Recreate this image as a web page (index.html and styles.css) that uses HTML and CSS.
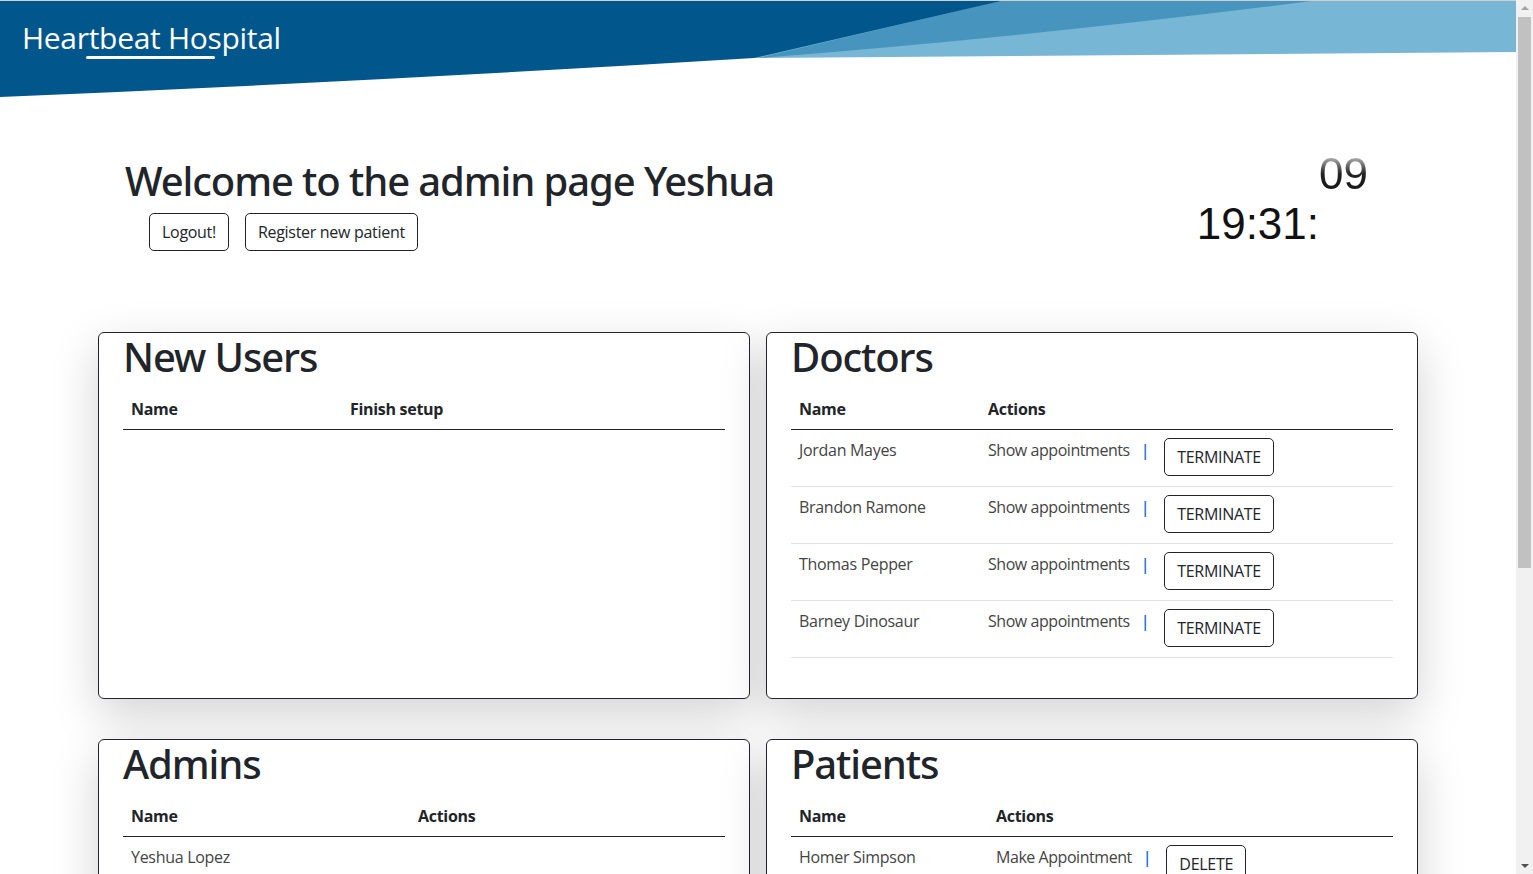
FILE: index.html
```html
<!DOCTYPE html>
<html lang="en">
<head>
<meta charset="utf-8">
<title>Heartbeat Hospital - Admin</title>
<link rel="stylesheet" href="styles.css">
</head>
<body>
<header class="topbar">
  <svg class="wave" viewBox="0 0 1516 96" preserveAspectRatio="none" aria-hidden="true">
    <rect x="0" y="0" width="1516" height="96" fill="#ffffff"/>
    <path d="M0 0 H1516 V51 L758 57 Z" fill="#78b6d6"/>
    <path d="M1000 0 H1312 Q1010 38 758 57 Z" fill="#4795bf"/>
    <path d="M0 0 H1001 L754 57 Q380 80 0 96 Z" fill="#01568c"/>
  </svg>
  <span class="brand">Heartbeat Hospital</span>
</header>

<main class="container">
  <section class="welcome">
    <div class="welcome-main">
      <h1 class="welcome-title">Welcome to the admin page Yeshua</h1>
      <div class="welcome-actions">
        <button class="btn">Logout!</button>
        <button class="btn">Register new patient</button>
      </div>
    </div>
    <div class="clock">19:31:<span class="clock-sec">09</span></div>
  </section>

  <section class="board">
    <article class="card">
      <h1 class="card-title">New Users</h1>
      <table class="list">
        <thead>
          <tr><th class="w-new">Name</th><th>Finish setup</th></tr>
        </thead>
        <tbody></tbody>
      </table>
    </article>

    <article class="card">
      <h1 class="card-title">Doctors</h1>
      <table class="list">
        <thead>
          <tr><th class="w-doc">Name</th><th>Actions</th></tr>
        </thead>
        <tbody>
          <tr><td>Jordan Mayes</td><td><div class="acts"><span class="act">Show appointments</span><span class="sep">|</span><button class="btn">TERMINATE</button></div></td></tr>
          <tr><td>Brandon Ramone</td><td><div class="acts"><span class="act">Show appointments</span><span class="sep">|</span><button class="btn">TERMINATE</button></div></td></tr>
          <tr><td>Thomas Pepper</td><td><div class="acts"><span class="act">Show appointments</span><span class="sep">|</span><button class="btn">TERMINATE</button></div></td></tr>
          <tr><td>Barney Dinosaur</td><td><div class="acts"><span class="act">Show appointments</span><span class="sep">|</span><button class="btn">TERMINATE</button></div></td></tr>
        </tbody>
      </table>
    </article>

    <article class="card">
      <h1 class="card-title">Admins</h1>
      <table class="list">
        <thead>
          <tr><th class="w-adm">Name</th><th>Actions</th></tr>
        </thead>
        <tbody>
          <tr><td>Yeshua Lopez</td><td></td></tr>
        </tbody>
      </table>
    </article>

    <article class="card">
      <h1 class="card-title">Patients</h1>
      <table class="list">
        <thead>
          <tr><th class="w-pat">Name</th><th>Actions</th></tr>
        </thead>
        <tbody>
          <tr><td>Homer Simpson</td><td><div class="acts"><span class="act">Make Appointment</span><span class="sep">|</span><button class="btn">DELETE</button></div></td></tr>
        </tbody>
      </table>
    </article>
  </section>
</main>

<div class="scrollbar" aria-hidden="true">
  <span class="sb-arrow sb-up"></span>
  <span class="sb-thumb"></span>
  <span class="sb-arrow sb-down"></span>
</div>
</body>
</html>
```

FILE: styles.css
```css
* { box-sizing: border-box; }

html, body {
  margin: 0;
  padding: 0;
}

body {
  margin-right: 17px;
  font-family: "Open Sans", "Noto Sans", "DejaVu Sans", sans-serif;
  font-size: 16px;
  line-height: 1.5;
  letter-spacing: -0.3px;
  color: #212529;
  background: #fff;
}

/* ---------- header ---------- */
.topbar {
  position: relative;
  height: 96px;
  border-top: 1px solid #cfcfcf;
}

.wave {
  position: absolute;
  left: 0;
  top: 0;
  width: 100%;
  height: 96px;
  display: block;
}

.brand {
  position: relative;
  display: inline-block;
  margin: 17px 0 0 22px;
  font-size: 30px;
  line-height: 40px;
  color: #fff;
  letter-spacing: -0.3px;
}

.brand::after {
  content: "";
  position: absolute;
  left: 64px;
  width: 129px;
  top: 38px;
  height: 3px;
  border-radius: 2px;
  background: #fff;
}

/* ---------- layout ---------- */
.container {
  width: 1320px;
  margin: 0 auto;
  padding-bottom: 400px;
}

.welcome {
  display: flex;
  justify-content: space-between;
  align-items: flex-start;
  padding: 61px 24px 0;
}

.welcome-title,
.card-title {
  margin: 0 0 8px;
  font-family: "Noto Sans", "Open Sans", sans-serif;
  font-size: 40px;
  font-weight: 500;
  line-height: 48px;
  letter-spacing: -1.1px;
}

.welcome-title {
  padding-left: 3px;
}

.welcome-actions {
  display: flex;
  gap: 16px;
  padding-left: 27px;
}

.btn {
  font-family: inherit;
  font-size: 16px;
  line-height: 24px;
  letter-spacing: -0.3px;
  padding: 6px 12px;
  color: #212529;
  background: #fff;
  border: 1px solid #212529;
  border-radius: 5px;
}

.clock {
  font-family: "Liberation Sans", Arial, sans-serif;
  font-size: 44px;
  line-height: normal;
  letter-spacing: 0;
  color: #111;
  margin-top: 42px;
  margin-right: 26px;
  white-space: nowrap;
}

.clock-sec {
  display: inline-block;
  transform: translateY(-50px);
  background: linear-gradient(to bottom, #ffffff 0%, #9a9a9a 22%, #222 50%, #111 100%);
  -webkit-background-clip: text;
  background-clip: text;
  color: transparent;
}

/* ---------- cards ---------- */
.board {
  display: grid;
  grid-template-columns: 1fr 1fr;
  column-gap: 16px;
  row-gap: 40px;
  margin-top: 81px;
}

.card {
  border: 1px solid #212529;
  border-radius: 6px;
  background: #fff;
  padding: 0 24px 24px;
  box-shadow: 0 16px 48px rgba(0, 0, 0, 0.175);
}

.list {
  width: 100%;
  border-collapse: collapse;
  margin-bottom: 16px;
}

.list th {
  text-align: left;
  font-weight: 700;
  padding: 8px;
  line-height: 24px;
  border-bottom: 1px solid #212529;
}

.list td {
  vertical-align: top;
  padding: 8px 8px 10px;
  line-height: 24px;
  color: #444;
  border-bottom: 1px solid #dee2e6;
}

.w-new { width: 219px; }
.w-doc { width: 189px; }
.w-adm { width: 287px; }
.w-pat { width: 197px; }

.acts {
  display: flex;
  align-items: flex-start;
}

.act {
  letter-spacing: -0.45px;
}

.sep {
  color: #1a6fd6;
  font-weight: 600;
  margin: 0 15px 0 11px;
}

/* ---------- window scrollbar look ---------- */
.scrollbar {
  position: fixed;
  top: 0;
  right: 0;
  width: 17px;
  height: 100vh;
  background: #f1f1f1;
  display: flex;
  flex-direction: column;
  align-items: center;
}

.sb-arrow {
  width: 0;
  height: 0;
  border-left: 4px solid transparent;
  border-right: 4px solid transparent;
}

.sb-up {
  margin-top: 6px;
  border-bottom: 4px solid #a3a3a3;
}

.sb-thumb {
  width: 13px;
  height: 551px;
  margin-top: 7px;
  background: #c1c1c1;
}

.sb-down {
  margin-top: auto;
  margin-bottom: 6px;
  border-top: 4px solid #505050;
}
```
